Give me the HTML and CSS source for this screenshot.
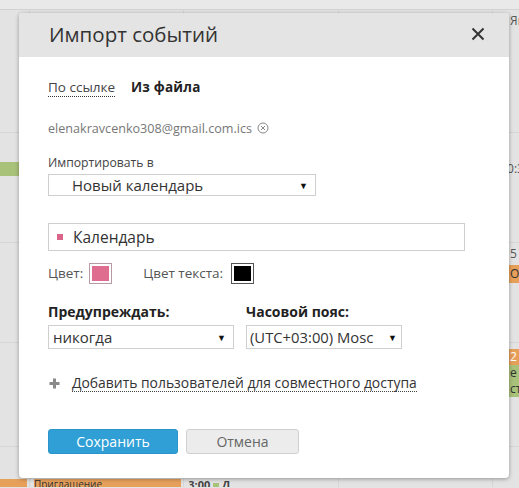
FILE: index.html
```html
<!DOCTYPE html>
<html lang="ru">
<head>
<meta charset="utf-8">
<title>Импорт событий</title>
<link rel="stylesheet" href="styles.css">
</head>
<body>
<div class="calendar">
  <div class="cal-top"></div>
  <div class="week w1">
    <div class="cell c-left"></div>
    <div class="cell c-mid"></div>
    <div class="cell c-mid"></div>
    <div class="cell c-mid"></div>
    <div class="cell c-right"><span class="day-text t1">Ян</span></div>
  </div>
  <div class="week w2">
    <div class="cell c-left"><div class="chip green l-green"></div></div>
    <div class="cell c-mid"></div>
    <div class="cell c-mid"></div>
    <div class="cell c-mid"></div>
    <div class="cell c-right"><span class="day-text t2">0:3</span></div>
  </div>
  <div class="week w3">
    <div class="cell c-left"></div>
    <div class="cell c-mid"></div>
    <div class="cell c-mid"></div>
    <div class="cell c-mid"></div>
    <div class="cell c-right"><span class="day-text t3">5</span><div class="chip orange r-chip">От</div></div>
  </div>
  <div class="week w4">
    <div class="cell c-left"></div>
    <div class="cell c-mid"></div>
    <div class="cell c-mid"></div>
    <div class="cell c-mid"></div>
    <div class="cell c-right"><div class="chip orange r-chip r-first">2</div><div class="chip green r-chip">е</div><div class="chip green r-chip">ст</div></div>
  </div>
  <div class="week w5">
    <div class="cell c-left"><div class="chip orange b-left"></div></div>
    <div class="cell c-mid"><div class="chip orange b-mid">Приглашение</div></div>
    <div class="cell c-mid"><span class="b-text">3:00 <span class="sq"></span> Д</span></div>
    <div class="cell c-mid"></div>
    <div class="cell c-right"></div>
  </div>
</div>

<div class="dialog">
  <div class="dlg-head">
    <h1 class="dlg-title">Импорт событий</h1>
    <svg class="close" width="14" height="14" viewBox="0 0 14 14"><path d="M1.5 1.5 L12.5 12.5 M12.5 1.5 L1.5 12.5" stroke="#333" stroke-width="2" fill="none"/></svg>
  </div>
  <div class="dlg-body">
    <div class="tabs">
      <span class="tab tab-link">По ссылке</span>
      <span class="tab tab-active">Из файла</span>
    </div>
    <div class="file-row">
      <span class="file-name">elenakravcenko308@gmail.com.ics</span>
      <svg class="file-remove" width="12" height="12" viewBox="0 0 12 12"><circle cx="6" cy="6" r="5" stroke="#888" stroke-width="1" fill="none"/><path d="M4 4 L8 8 M8 4 L4 8" stroke="#888" stroke-width="1" fill="none"/></svg>
    </div>
    <div class="label">Импортировать в</div>
    <div class="select sel-cal"><span class="sel-text indent">Новый календарь</span><span class="arrow">▼</span></div>
    <div class="input cal-name"><span class="swatch"></span><span class="input-text">Календарь</span></div>
    <div class="color-row">
      <span class="color-label">Цвет:</span>
      <span class="color-box pink-box"><span class="fill pink"></span></span>
      <span class="color-label second">Цвет текста:</span>
      <span class="color-box black-box"><span class="fill black"></span></span>
    </div>
    <div class="two-col">
      <div class="col col-warn">
        <div class="label bold">Предупреждать:</div>
        <div class="select sel-warn"><span class="sel-text">никогда</span><span class="arrow">▼</span></div>
      </div>
      <div class="col col-tz">
        <div class="label bold">Часовой пояс:</div>
        <div class="select sel-tz"><span class="sel-text">(UTC+03:00) Mosc</span><span class="arrow">▼</span></div>
      </div>
    </div>
    <div class="share">
      <svg class="plus" width="11" height="11" viewBox="0 0 11 11"><path d="M5.5 0.5 V10.5 M0.5 5.5 H10.5" stroke="#8a8a8a" stroke-width="3" fill="none"/></svg>
      <span class="share-link">Добавить пользователей для совместного доступа</span>
    </div>
    <div class="buttons">
      <button class="btn btn-save">Сохранить</button>
      <button class="btn btn-cancel">Отмена</button>
    </div>
  </div>
</div>
</body>
</html>
```

FILE: styles.css
```css
* { box-sizing: border-box; }
html, body { margin: 0; padding: 0; }
body {
  width: 519px;
  height: 488px;
  overflow: hidden;
  position: relative;
  background: #e2e2e2;
  font-family: "Open Sans", "Noto Sans", sans-serif;
  color: #333;
}

/* dimmed calendar background */
.calendar { width: 519px; height: 488px; background: #e3e3e3; }
.cal-top { height: 10px; background: #e9e9e9; border-bottom: 1px solid #d2d2d2; }
.week { display: flex; border-bottom: 1px solid #d6d6d6; }
.w1 { height: 123px; }
.w2 { height: 110px; }
.w3 { height: 100px; }
.w4 { height: 104px; }
.w5 { height: 40px; border-bottom: none; }
.cell { border-right: 1px solid #d6d6d6; position: relative; overflow: hidden; }
.c-left { width: 30px; }
.c-mid { width: 155px; }
.c-right { width: 26px; border-right: none; }
.chip { font-size: 12px; line-height: 16px; color: #333; white-space: nowrap; }
.green { background: #a9c27a; }
.orange { background: #e7a05a; }
.l-green { margin-top: 29px; height: 14px; width: 19px; }
.day-text { display: block; font-size: 12px; color: #555; white-space: nowrap; }
.t1 { margin-top: 2px; margin-left: 17px; }
.t2 { margin-top: 27px; margin-left: 14px; }
.t3 { margin-top: 2px; margin-left: 17px; }
.r-chip { margin-left: 16px; height: 16px; padding-left: 1px; }
.w3 .r-chip { margin-top: 3px; height: 18px; line-height: 18px; }
.r-first { margin-top: 6px; color: #fff; }
.b-left { margin-top: 32px; height: 10px; width: 27px; }
.b-mid { margin-top: 32px; margin-left: 4px; height: 10px; width: 147px; font-size: 10px; line-height: 10px; color: #333; }
.b-text { display: block; margin-top: 30px; margin-left: 4px; font-size: 11px; font-weight: bold; color: #444; }
.sq { display: inline-block; width: 6px; height: 6px; background: #a9c27a; }

/* dialog */
.dialog {
  position: absolute;
  left: 19px;
  top: 13px;
  width: 490px;
  height: 465px;
  background: #fff;
  border-radius: 4px;
  box-shadow: 0 1px 4px rgba(0,0,0,0.35);
  overflow: hidden;
}
.dlg-head {
  height: 44px;
  background: #e4e4e4;
  display: flex;
  align-items: center;
  justify-content: space-between;
  padding: 0 24px 0 30px;
}
.dlg-title { margin: 0; font-size: 20.5px; font-weight: normal; color: #333; line-height: 26px; margin-top: -2px; }
.close { display: block; margin-top: -3px; }

.dlg-body { padding: 22px 30px 0 29px; }
.tabs { display: flex; gap: 16px; font-size: 13.5px; line-height: 17px; }
.tab-link { border-bottom: 1px dotted #333; color: #444; }
.tab-active { font-weight: bold; color: #222; letter-spacing: 0.2px; }

.file-row { display: flex; align-items: center; gap: 5px; margin-top: 23px; height: 16px; }
.file-name { font-size: 12.6px; color: #777; }
.file-remove { display: block; }

.label { font-size: 12.2px; line-height: 16px; color: #444; margin-top: 19px; }
.label.bold { font-size: 14px; font-weight: bold; color: #222; margin-top: 0; }

.select {
  display: flex;
  align-items: center;
  justify-content: space-between;
  border: 1px solid #cfcfcf;
  background: #fff;
  height: 22px;
  margin-top: 3px;
  padding: 0 7px 0 4px;
}
.sel-text { font-size: 15px; line-height: 18px; color: #333; white-space: nowrap; overflow: hidden; flex: 1; min-width: 0; }
.sel-text.indent { padding-left: 19px; }
.arrow { font-size: 9px; color: #111; flex: none; margin-left: 4px; }
.sel-cal { width: 268px; }

.input {
  display: flex;
  align-items: center;
  border: 1px solid #cfcfcf;
  height: 28px;
  width: 417px;
  margin-top: 27px;
  padding-left: 8px;
}
.swatch { width: 6px; height: 6px; background: #d9668a; margin-right: 10px; }
.input-text { font-size: 15.5px; line-height: 18px; color: #333; }

.color-row { display: flex; align-items: center; margin-top: 11px; height: 22px; }
.color-label { font-size: 13.5px; color: #555; }
.color-label.second { margin-left: 31px; }
.color-box { display: flex; width: 23px; height: 21px; border: 1px solid #b89aa5; padding: 2px; margin-left: 6px; background: #fff; }
.black-box { border-color: #555; margin-left: 8px; }
.fill { flex: 1; }
.pink { background: #df6d8f; }
.black { background: #000; }

.two-col { display: flex; margin-top: 20px; }
.col-warn { width: 198px; }
.col-tz { width: 156px; }
.sel-warn { width: 186px; height: 24px; margin-top: 5px; }
.sel-tz { width: 156px; height: 24px; margin-top: 5px; padding-left: 3px; padding-right: 4px; }
.sel-tz .sel-text { font-size: 14.8px; }

.share { display: flex; align-items: center; margin-top: 26px; height: 16px; }
.plus { display: block; margin-left: 1px; margin-right: 12px; }
.share-link { font-size: 13.9px; line-height: 16px; color: #333; border-bottom: 1px dotted #444; }

.buttons { display: flex; gap: 8px; margin-top: 38px; }
.btn {
  font-family: "Open Sans", "Noto Sans", sans-serif;
  font-size: 14px;
  height: 25px;
  border-radius: 3px;
  padding: 0;
  cursor: pointer;
}
.btn-save { width: 130px; background: #2f9fd6; border: 1px solid #2b95ca; color: #fff; }
.btn-cancel { width: 113px; background: #ececec; border: 1px solid #cfcfcf; color: #666; }
```
